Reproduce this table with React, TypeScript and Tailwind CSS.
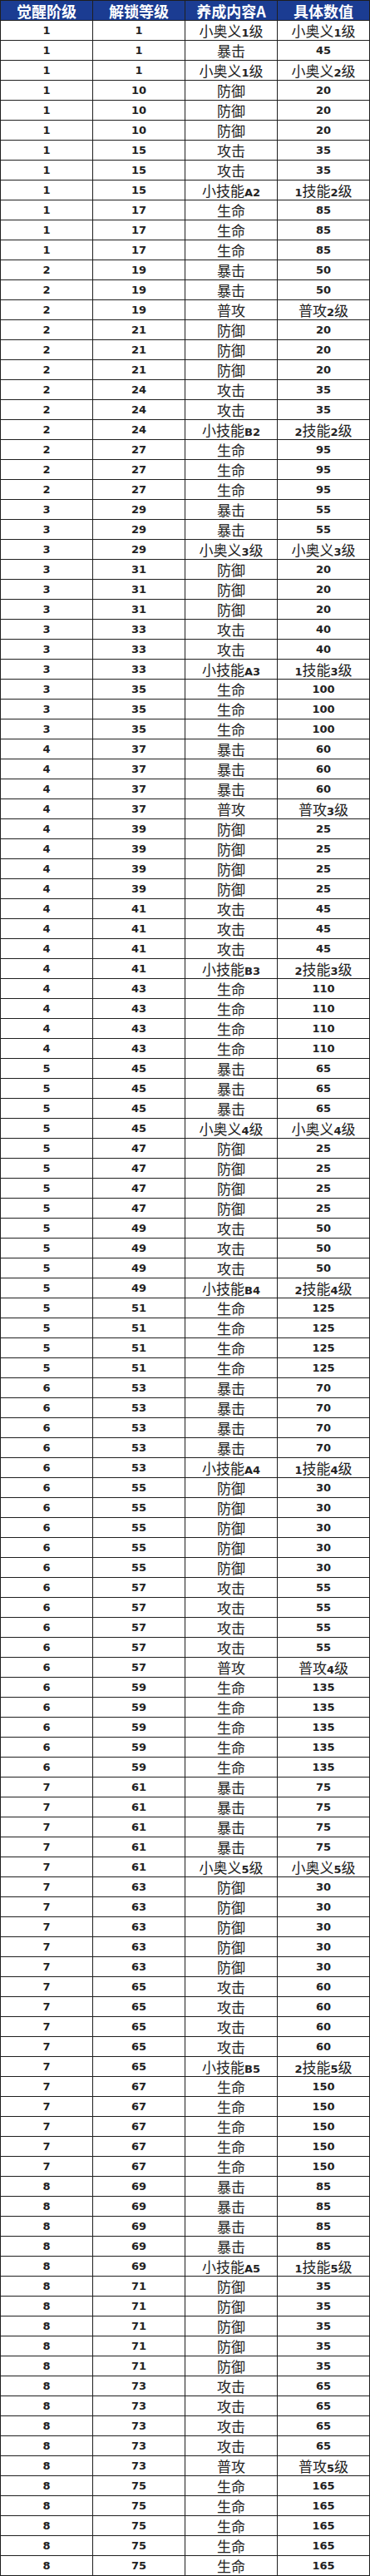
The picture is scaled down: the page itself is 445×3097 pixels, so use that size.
import React from 'react';

type Row = [number, number, string, string];

// stage, unlock level, content, value, repeat count
const groups: [number, number, string, string, number][] = [
  [1, 1, '小奥义1级', '小奥义1级', 1],
  [1, 1, '暴击', '45', 1],
  [1, 1, '小奥义1级', '小奥义2级', 1],
  [1, 10, '防御', '20', 3],
  [1, 15, '攻击', '35', 2],
  [1, 15, '小技能A2', '1技能2级', 1],
  [1, 17, '生命', '85', 3],
  [2, 19, '暴击', '50', 2],
  [2, 19, '普攻', '普攻2级', 1],
  [2, 21, '防御', '20', 3],
  [2, 24, '攻击', '35', 2],
  [2, 24, '小技能B2', '2技能2级', 1],
  [2, 27, '生命', '95', 3],
  [3, 29, '暴击', '55', 2],
  [3, 29, '小奥义3级', '小奥义3级', 1],
  [3, 31, '防御', '20', 3],
  [3, 33, '攻击', '40', 2],
  [3, 33, '小技能A3', '1技能3级', 1],
  [3, 35, '生命', '100', 3],
  [4, 37, '暴击', '60', 3],
  [4, 37, '普攻', '普攻3级', 1],
  [4, 39, '防御', '25', 4],
  [4, 41, '攻击', '45', 3],
  [4, 41, '小技能B3', '2技能3级', 1],
  [4, 43, '生命', '110', 4],
  [5, 45, '暴击', '65', 3],
  [5, 45, '小奥义4级', '小奥义4级', 1],
  [5, 47, '防御', '25', 4],
  [5, 49, '攻击', '50', 3],
  [5, 49, '小技能B4', '2技能4级', 1],
  [5, 51, '生命', '125', 4],
  [6, 53, '暴击', '70', 4],
  [6, 53, '小技能A4', '1技能4级', 1],
  [6, 55, '防御', '30', 5],
  [6, 57, '攻击', '55', 4],
  [6, 57, '普攻', '普攻4级', 1],
  [6, 59, '生命', '135', 5],
  [7, 61, '暴击', '75', 4],
  [7, 61, '小奥义5级', '小奥义5级', 1],
  [7, 63, '防御', '30', 5],
  [7, 65, '攻击', '60', 4],
  [7, 65, '小技能B5', '2技能5级', 1],
  [7, 67, '生命', '150', 5],
  [8, 69, '暴击', '85', 4],
  [8, 69, '小技能A5', '1技能5级', 1],
  [8, 71, '防御', '35', 5],
  [8, 73, '攻击', '65', 4],
  [8, 73, '普攻', '普攻5级', 1],
  [8, 75, '生命', '165', 5],
];

const rows: Row[] = groups.flatMap(([s, l, c, v, n]) => Array.from({ length: n }, () => [s, l, c, v] as Row));

const num = "font-['DejaVu_Sans','Liberation_Sans',sans-serif] font-bold text-[13px]";
const cjk = "font-['Noto_Sans_CJK_SC',sans-serif] text-[17px]";

function Cell({ text }: { text: string | number }) {
  const s = String(text);
  const isNum = /^[0-9]+$/.test(s);
  return (
    <div className="w-[111px] h-[24px] border-r border-b border-[#1f1f1f] flex items-center justify-center text-[#222222] leading-none">
      {isNum ? (
        <span className={num}>{s}</span>
      ) : (
        <span className={cjk}>
          {s.split(/([0-9A-Z]+)/).map((p, i) =>
            /^[0-9A-Z]+$/.test(p) ? (
              <span key={i} className={num}>
                {p}
              </span>
            ) : (
              <span key={i}>{p}</span>
            ),
          )}
        </span>
      )}
    </div>
  );
}

export default function App() {
  const head = ['觉醒阶级', '解锁等级', '养成内容A', '具体数值'];
  return (
    <div className="w-[445px] bg-white">
      <div className="w-[445px] border-l border-t border-[#1f1f1f]">
        <div className="flex bg-[#1b3c92]">
          {head.map((h) => (
            <div
              key={h}
              className="w-[111px] h-[24px] border-r border-b border-[#1f1f1f] flex items-center justify-center text-white font-bold text-[18px] font-['Noto_Sans_CJK_SC',sans-serif] leading-none"
            >
              {h}
            </div>
          ))}
        </div>
        {rows.map((r, i) => (
          <div key={i} className="flex">
            {r.map((c, j) => (
              <Cell key={j} text={c} />
            ))}
          </div>
        ))}
      </div>
    </div>
  );
}
